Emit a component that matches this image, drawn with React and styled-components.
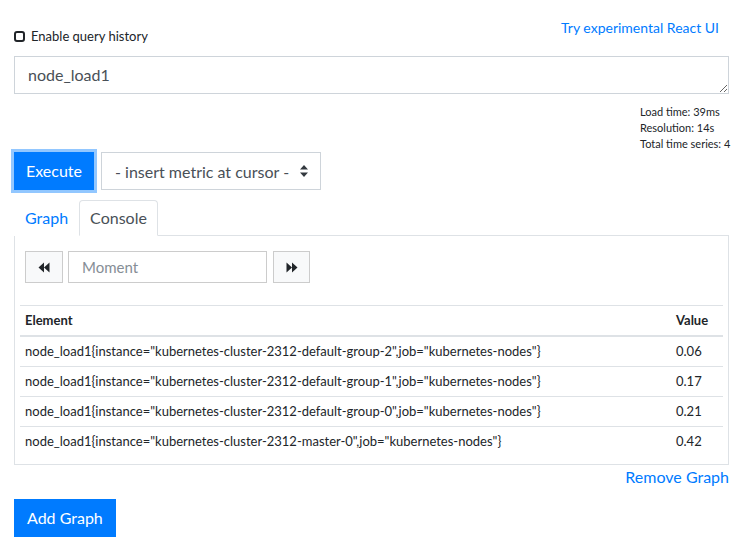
import React from 'react';
import styled, { createGlobalStyle } from 'styled-components';

const GlobalStyle = createGlobalStyle`
  body {
    margin: 0;
    background: #fff;
    color: #212529;
    font-family: Lato, "Open Sans", sans-serif;
  }
  * { box-sizing: border-box; }
`;

const Page = styled.div`
  padding: 0 7px 0 14px;
`;

const TopBar = styled.div`
  display: flex;
  justify-content: space-between;
  align-items: flex-start;
  padding-top: 18px;
  height: 46px;
`;

const HistoryLabel = styled.label`
  display: flex;
  align-items: center;
  gap: 6px;
  margin-top: 9px;
  font-size: 13px;
  line-height: 18px;
`;

const Check = styled.input`
  appearance: none;
  margin: 0;
  width: 11px;
  height: 11px;
  border: 2px solid #212529;
  border-radius: 3px;
`;

const ReactLink = styled.a`
  margin-right: 10px;
  font-size: 14px;
  line-height: 20px;
  color: #007bff;
  text-decoration: none;
`;

const Expression = styled.textarea`
  display: block;
  width: 100%;
  height: 38px;
  margin: 10px 0 0;
  padding: 6px 13px;
  font-family: inherit;
  font-size: 16px;
  line-height: 24px;
  color: #495057;
  border: 1px solid #ced4da;
  border-radius: 0;
  outline: none;
  resize: vertical;
`;

const Stats = styled.div`
  margin-top: 10px;
  display: flex;
  flex-direction: column;
  align-items: flex-end;
  font-size: 11px;
  line-height: 16px;
`;

const StatLine = styled.div`
  width: 89px;
  white-space: nowrap;
`;

const ControlRow = styled.div`
  display: flex;
  gap: 7px;
`;

const Button = styled.button`
  height: 38px;
  padding: 6px ${p => p.$px || 12}px;
  font-family: inherit;
  font-size: 16px;
  line-height: 24px;
  color: #fff;
  background: #007bff;
  border: 1px solid #007bff;
  border-radius: 0;
  box-shadow: ${p => (p.$focused ? '0 0 0 3px rgba(38, 143, 255, 0.5)' : 'none')};
`;

const MetricSelect = styled.div`
  width: 220px;
  height: 38px;
  display: flex;
  align-items: center;
  justify-content: space-between;
  padding: 0 12px 0 13px;
  font-size: 16px;
  color: #495057;
  border: 1px solid #ced4da;
`;

const Tabs = styled.div`
  display: flex;
  margin-top: 10px;
  border-bottom: 1px solid #dee2e6;
`;

const Tab = styled.div`
  padding: 7px 10px;
  font-size: 16px;
  line-height: 20px;
  margin-bottom: -1px;
  color: ${p => (p.$active ? '#495057' : '#007bff')};
  background: #fff;
  border: 1px solid ${p => (p.$active ? '#dee2e6' : 'transparent')};
  border-bottom-color: ${p => (p.$active ? '#fff' : 'transparent')};
  border-radius: 4px 4px 0 0;
`;

const Panel = styled.div`
  border: 1px solid #dee2e6;
  border-top: none;
  padding: 15px 5px 8px;
`;

const TimeControls = styled.div`
  display: flex;
  align-items: stretch;
  margin-left: 5px;
  height: 32px;
`;

const IconButton = styled.div`
  width: ${p => p.$w}px;
  display: flex;
  align-items: center;
  justify-content: center;
  background: #f8f9fa;
  border: 1px solid #ccc;
`;

const MomentInput = styled.div`
  width: 199px;
  margin: 0 6px 0 5px;
  display: flex;
  align-items: center;
  padding-left: 13px;
  font-size: 15px;
  color: #868e96;
  border: 1px solid #ccc;
`;

const Table = styled.table`
  width: 100%;
  margin-top: 22px;
  border-collapse: collapse;
  font-size: 13px;
  line-height: 17px;
`;

const Th = styled.th`
  text-align: left;
  font-weight: 700;
  padding: 6px 5px;
  border-top: 1px solid #dee2e6;
  border-bottom: 2px solid #dee2e6;
  width: ${p => (p.$w ? `${p.$w}px` : 'auto')};
`;

const Td = styled.td`
  padding: 6px 5px;
  border-top: 1px solid #dee2e6;
  white-space: nowrap;
`;

const RemoveRow = styled.div`
  display: flex;
  justify-content: flex-end;
  margin-top: 2px;
`;

const RemoveLink = styled.a`
  font-size: 16px;
  line-height: 20px;
  color: #007bff;
  text-decoration: none;
`;

const AddRow = styled.div`
  margin-top: 12px;
`;

const UpDown = () => (
  <svg width="8" height="12" viewBox="0 0 8 12">
    <path d="M4 0 L8 4.5 H0 Z M4 12 L8 7.5 H0 Z" fill="#343a40" />
  </svg>
);

const Backward = () => (
  <svg width="12" height="11" viewBox="0 0 12 11">
    <path d="M0.5 5.5 L6 0.5 V10.5 Z M6 5.5 L11.5 0.5 V10.5 Z" fill="#212529" />
  </svg>
);

const Forward = () => (
  <svg width="12" height="11" viewBox="0 0 12 11">
    <path d="M11.5 5.5 L6 0.5 V10.5 Z M6 5.5 L0.5 0.5 V10.5 Z" fill="#212529" />
  </svg>
);

const rows = [
  ['node_load1{instance="kubernetes-cluster-2312-default-group-2",job="kubernetes-nodes"}', '0.06'],
  ['node_load1{instance="kubernetes-cluster-2312-default-group-1",job="kubernetes-nodes"}', '0.17'],
  ['node_load1{instance="kubernetes-cluster-2312-default-group-0",job="kubernetes-nodes"}', '0.21'],
  ['node_load1{instance="kubernetes-cluster-2312-master-0",job="kubernetes-nodes"}', '0.42'],
];

export default function App() {
  return (
    <>
      <GlobalStyle />
      <Page>
        <TopBar>
          <HistoryLabel>
            <Check type="checkbox" />
            Enable query history
          </HistoryLabel>
          <ReactLink href="#">Try experimental React UI</ReactLink>
        </TopBar>
        <Expression defaultValue="node_load1" rows={1} />
        <Stats>
          <StatLine>Load time: 39ms</StatLine>
          <StatLine>Resolution: 14s</StatLine>
          <StatLine>Total time series: 4</StatLine>
        </Stats>
        <ControlRow>
          <Button $focused $px={11}>Execute</Button>
          <MetricSelect>
            <span>- insert metric at cursor -</span>
            <UpDown />
          </MetricSelect>
        </ControlRow>
        <Tabs>
          <Tab>Graph</Tab>
          <Tab $active>Console</Tab>
        </Tabs>
        <Panel>
          <TimeControls>
            <IconButton $w={38}><Backward /></IconButton>
            <MomentInput>Moment</MomentInput>
            <IconButton $w={37}><Forward /></IconButton>
          </TimeControls>
          <Table>
            <thead>
              <tr>
                <Th>Element</Th>
                <Th $w={52}>Value</Th>
              </tr>
            </thead>
            <tbody>
              {rows.map(([el, val]) => (
                <tr key={el}>
                  <Td>{el}</Td>
                  <Td>{val}</Td>
                </tr>
              ))}
            </tbody>
          </Table>
        </Panel>
        <RemoveRow>
          <RemoveLink href="#">Remove Graph</RemoveLink>
        </RemoveRow>
        <AddRow>
          <Button>Add Graph</Button>
        </AddRow>
      </Page>
    </>
  );
}
